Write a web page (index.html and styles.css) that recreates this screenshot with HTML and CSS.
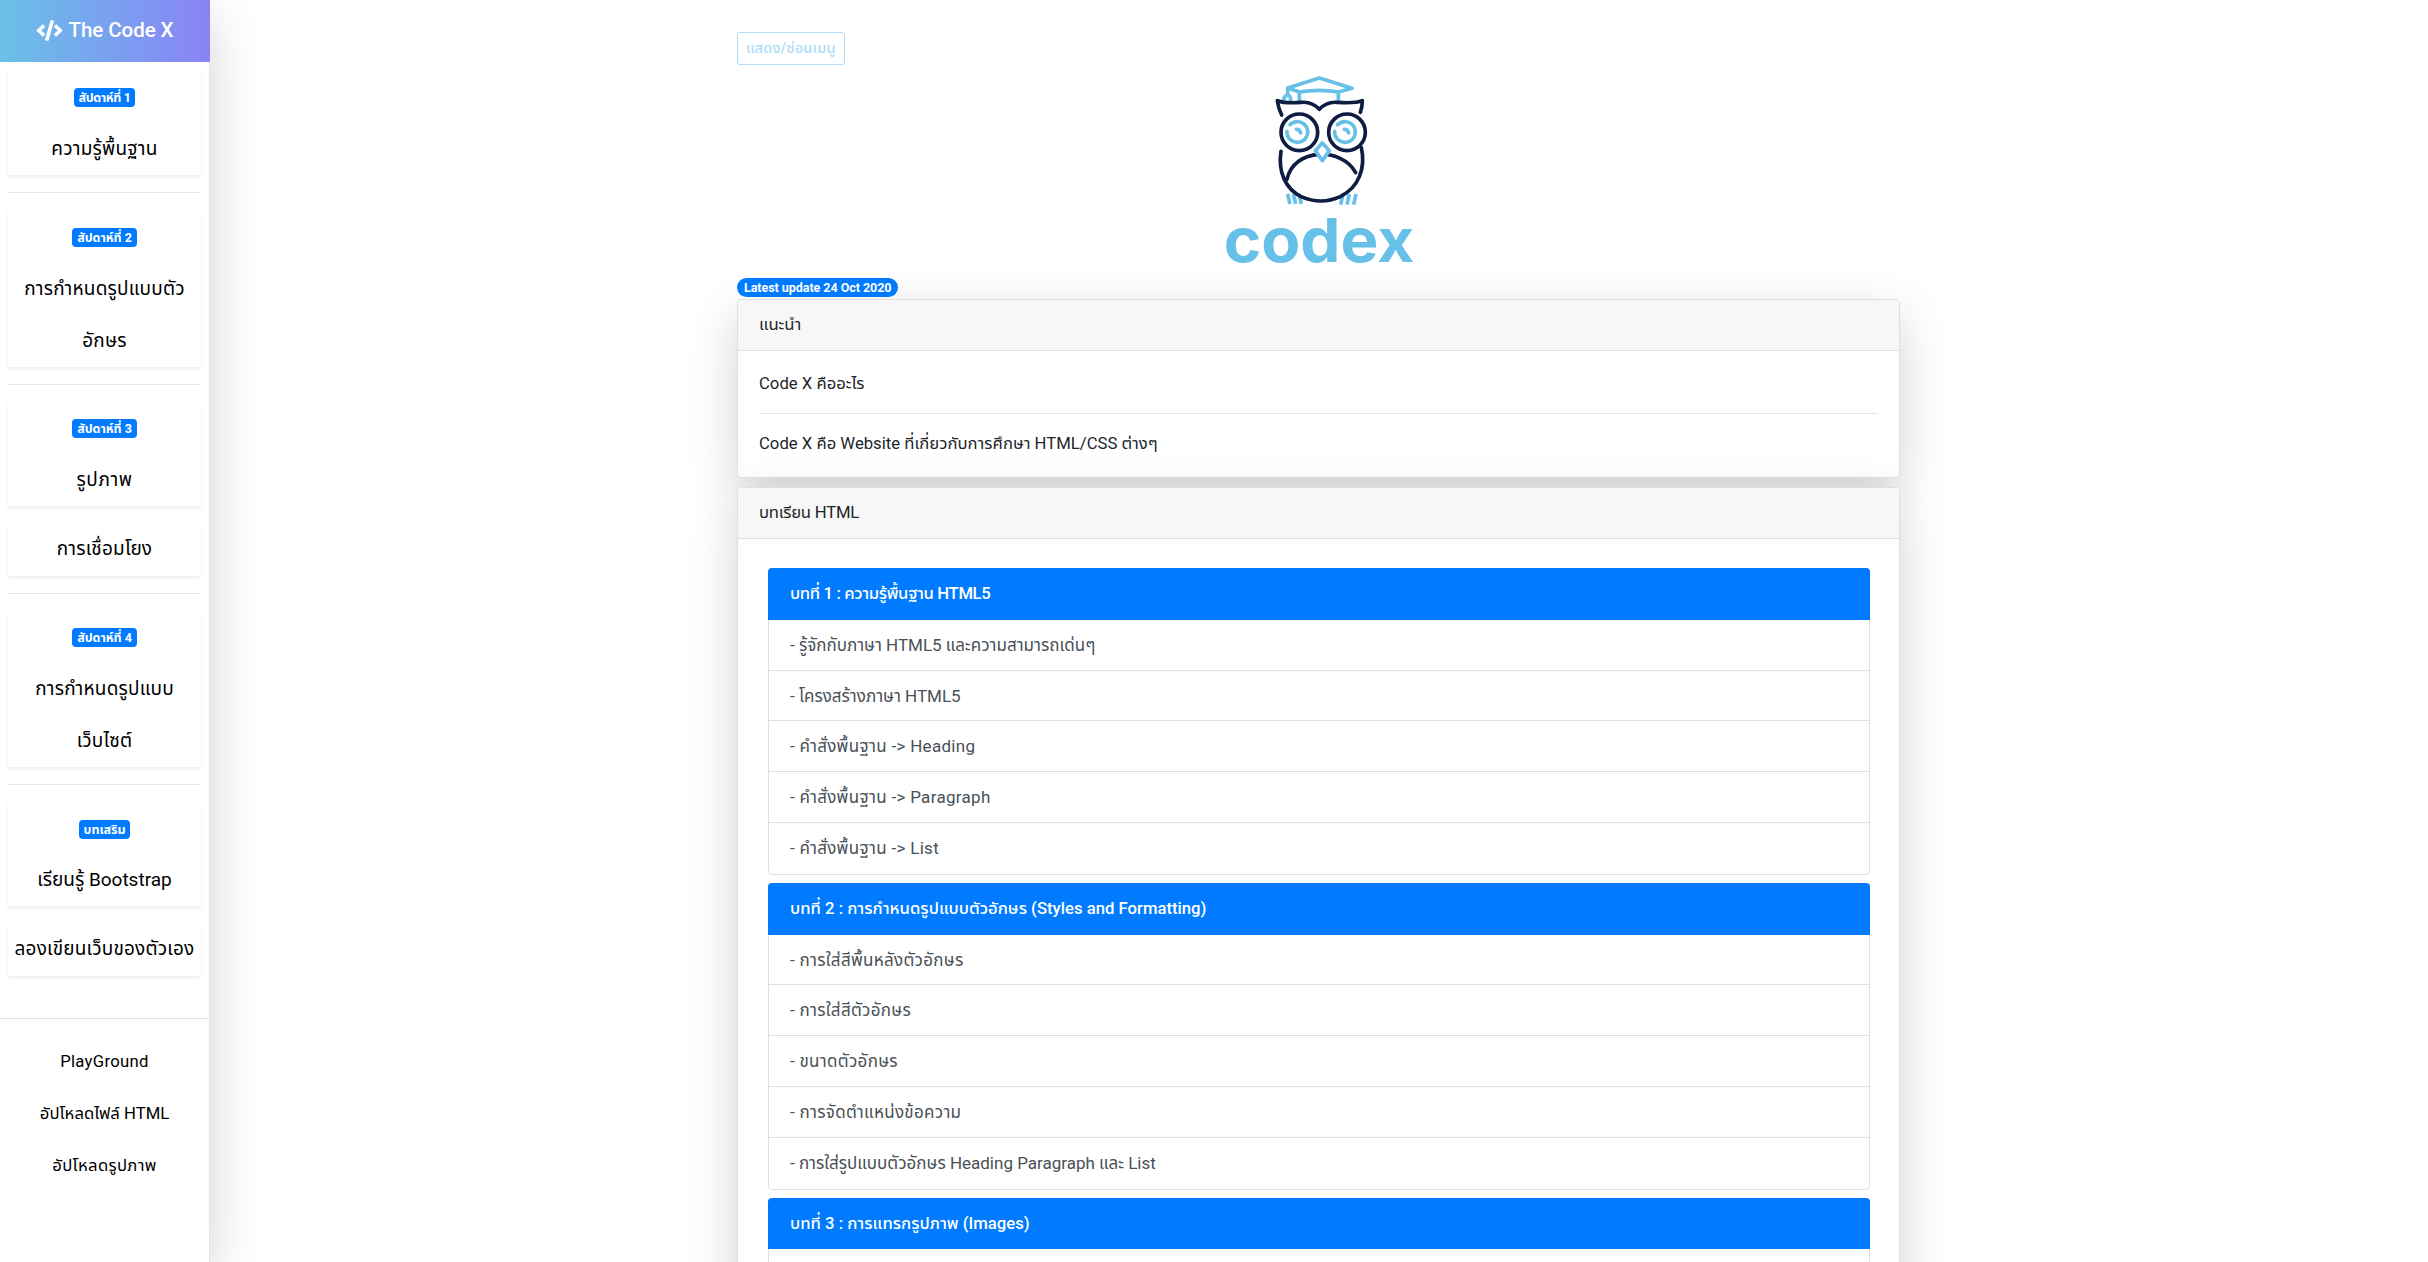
FILE: index.html
```html
<!DOCTYPE html>
<html lang="th">
<head>
<meta charset="utf-8">
<title>The Code X</title>
<link rel="stylesheet" href="styles.css">
</head>
<body>
<div class="wrapper">
  <nav class="sidebar">
    <div class="brand">
      <svg class="brand-icon" viewBox="0 0 640 512" fill="#fff"><path d="M278.9 511.5l-61-17.7c-6.4-1.8-10-8.5-8.2-14.9L346.2 8.7c1.8-6.4 8.5-10 14.9-8.2l61 17.7c6.4 1.8 10 8.5 8.2 14.9L293.8 503.3c-1.9 6.4-8.5 10.1-14.9 8.2zm-114-112.2l43.5-46.4c4.6-4.9 4.3-12.7-.8-17.2L117 256l90.6-79.7c5.1-4.5 5.5-12.3.8-17.2l-43.5-46.4c-4.5-4.8-12.1-5.1-17-.5L3.8 247.2c-5.1 4.7-5.1 12.8 0 17.5l144.1 135.1c4.9 4.6 12.5 4.4 17-.5zm327.2.6l144.1-135.1c5.1-4.7 5.1-12.8 0-17.5L492.1 112.1c-4.8-4.5-12.4-4.3-17 .5L431.6 159c-4.6 4.9-4.3 12.7.8 17.2L523 256l-90.6 79.7c-5.1 4.5-5.5 12.3-.8 17.2l43.5 46.4c4.5 4.9 12.1 5.1 17 .6z"/></svg>
      <span>The Code X</span>
    </div>
    <div class="menu">
      <a class="item"><span class="line"><b class="badge tight">สัปดาห์ที่ 1</b></span><span class="line">ความรู้พื้นฐาน</span></a>
      <hr>
      <a class="item"><span class="line"><b class="badge">สัปดาห์ที่ 2</b></span><span class="line">การกำหนดรูปแบบตัว</span><span class="line">อักษร</span></a>
      <hr>
      <a class="item"><span class="line"><b class="badge">สัปดาห์ที่ 3</b></span><span class="line wide">รูปภาพ</span></a>
      <a class="item next"><span class="line">การเชื่อมโยง</span></a>
      <hr>
      <a class="item"><span class="line"><b class="badge">สัปดาห์ที่ 4</b></span><span class="line">การกำหนดรูปแบบ</span><span class="line">เว็บไซต์</span></a>
      <hr>
      <a class="item"><span class="line"><b class="badge">บทเสริม</b></span><span class="line plain">เรียนรู้ Bootstrap</span></a>
      <a class="item next"><span class="line">ลองเขียนเว็บของตัวเอง</span></a>
    </div>
    <div class="tools">
      <a class="line loose">PlayGround</a>
      <a class="line">อัปโหลดไฟล์ HTML</a>
      <a class="line loose">อัปโหลดรูปภาพ</a>
    </div>
  </nav>
  <main class="content">
    <button class="toggle">แสดง/ซ่อนเมนู</button>
    <svg class="logo" viewBox="-4 0 720 660" fill="none" stroke-width="11" stroke-linecap="round" stroke-linejoin="round">
      <g stroke="#67c0e7">
        <path d="M262 84 357 54l98 31-40 11q-58-10-118 0zM297 97v25M414 97v25M262 86v18M250 120q2-13 12-15q10 2 9 17"/>
        <path d="M262 402l7 30M279 402l7 30M296 402l7 30M428 402l-7 32M447 402l-7 32M467 402l-7 32" stroke-linecap="butt"/>
        <path d="M269 194a31 31 0 1 1-9 20M412 194a31 31 0 1 1-9 20M288 208q11 0 13 11M432 208q11 0 13 11"/>
      </g>
      <g stroke="#0e1c42">
        <path d="M244 165q-11-23-13-43q24 9 72 5q32-3 54 21q22-24 54-21q54 4 75-5q0 18-6 35"/>
        <circle cx="297" cy="217" r="55"/><circle cx="440" cy="217" r="55"/>
        <path d="M242 274c-10 65 15 112 60 136q60 26 118 0c55-28 77-85 63-147M260 358c20-95 165-98 206-20"/>
      </g>
      <path d="M366 249l21 23-21 30-21-30z" stroke="#67c0e7" fill="#fff"/>
      <text x="70" y="605" textLength="572" lengthAdjust="spacingAndGlyphs" class="logo-text">codex</text>
    </svg>
    <div class="updated"><b class="badge pill">Latest update 24 Oct 2020</b></div>
    <section class="card">
      <header class="card-head">แนะนำ</header>
      <div class="card-body">
        <p>Code X คืออะไร</p>
        <hr>
        <p>Code X คือ Website ที่เกี่ยวกับการศึกษา HTML/CSS ต่างๆ</p>
      </div>
    </section>
    <section class="card lessons">
      <header class="card-head snug">บทเรียน HTML</header>
      <div class="lists">
        <ul class="list">
          <li class="active tight">บทที่ 1 : ความรู้พื้นฐาน HTML5</li>
          <li>- รู้จักกับภาษา HTML5 และความสามารถเด่นๆ</li>
          <li>- โครงสร้างภาษา HTML5</li>
          <li class="loose">- คำสั่งพื้นฐาน -&gt; Heading</li>
          <li class="loose">- คำสั่งพื้นฐาน -&gt; Paragraph</li>
          <li class="loose">- คำสั่งพื้นฐาน -&gt; List</li>
        </ul>
        <ul class="list">
          <li class="active">บทที่ 2 : การกำหนดรูปแบบตัวอักษร (Styles and Formatting)</li>
          <li class="loose">- การใส่สีพื้นหลังตัวอักษร</li>
          <li class="loose">- การใส่สีตัวอักษร</li>
          <li class="loose">- ขนาดตัวอักษร</li>
          <li class="loose">- การจัดตำแหน่งข้อความ</li>
          <li>- การใส่รูปแบบตัวอักษร Heading Paragraph และ List</li>
        </ul>
        <ul class="list">
          <li class="active">บทที่ 3 : การแทรกรูปภาพ (Images)</li>
          <li></li>
        </ul>
      </div>
    </section>
  </main>
</div>
</body>
</html>
```
FILE: styles.css
```css
* { box-sizing: border-box; }
body { margin: 0; height: 1262px; overflow: hidden; background: #fff; color: #212529; font: 16.7px/25px Roboto, "Noto Sans Thai", "Noto Sans", sans-serif; }
hr { height: 1px; margin: 0; border: 0; background: #e5e5e5; }
p { margin: 0; }
.wrapper { display: flex; height: 1262px; padding-right: 1px; overflow: hidden; }
.sidebar { width: 210px; flex: none; background: #fff; box-shadow: 0 17px 50px rgba(0,0,0,.175); color: #000; text-align: center; border-right: 1px solid #e4e4e4; white-space: nowrap; }
.brand { height: 62px; margin-right: -1px; padding-bottom: 2px; display: flex; align-items: center; justify-content: center; gap: 5px; background: linear-gradient(90deg, #69c1e8, #8983f6); color: #fff; font-size: 20.5px; font-weight: 500; letter-spacing: -.05px; }
.brand-icon { width: 27px; height: 21px; }
.menu { padding: 9px 8px 0; font-size: 19px; letter-spacing: .2px; }
.menu hr { margin: 17px 0; }
.item { display: block; background: #fff; box-shadow: 0 2px 4px rgba(0,0,0,.075); }
.item.next { margin-top: 17px; }
.line { display: block; height: 52.2px; line-height: 52px; }
.badge { display: inline-block; padding: 0 5px; height: 19px; border-radius: 4px; background: #007bff; color: #fff; font-size: 12.5px; line-height: 19px; font-weight: 700; letter-spacing: -.05px; vertical-align: middle; }
.tight, .badge.tight { letter-spacing: -.37px; }
.snug { letter-spacing: -.24px; }
.loose { letter-spacing: .3px; }
.wide { letter-spacing: .6px; }
.plain { letter-spacing: 0; }
.tools { margin-top: 42px; padding-top: 17px; border-top: 1px solid #e2e2e2; }
.content { width: 1163px; flex: none; margin: 0 auto; padding-top: 32px; }
.toggle { display: block; height: 33px; padding: 0 8px; border: 1px solid #aedbf9; border-radius: 3px; background: #fff; color: #aedbf9; font: inherit; font-size: 14.6px; font-weight: 500; letter-spacing: .12px; }
.logo { display: block; width: 240px; height: 220px; margin: -5px auto 0; }
.logo-text { font: 700 183px Inter, sans-serif; fill: #67c0e7; }
.updated { height: 19px; display: flex; margin: -2px 0 2px; }
.pill { border-radius: 10px; padding: 0 7px; }
.card { border: 1px solid #dfdfdf; border-radius: 4px; background: #fff; box-shadow: 0 17px 50px rgba(0,0,0,.175); }
.card-head { height: 51px; line-height: 50px; padding: 0 21px; background: #f7f7f7; border-bottom: 1px solid #dfdfdf; border-radius: 3px 3px 0 0; }
.card-body { padding: 20px 21px 21px; }
.card-body hr { margin: 17px 0; }
.lessons { margin-top: 9px; height: 900px; }
.lists { display: flex; flex-direction: column; gap: 8px; padding: 29px 29px 29px 30px; }
.list { list-style: none; margin: 0; padding: 0; border: 1px solid #dfdfdf; border-radius: 4px; color: #495057; font-size: 17px; }
.list li { height: 50.8px; padding: 0 21px; line-height: 50px; border-bottom: 1px solid #dfdfdf; }
.list .active { margin: -1px -1px 0; padding: 0 22px; height: 51.8px; line-height: 52px; background: #007bff; color: #fff; border: 0; border-radius: 4px 4px 0 0; font-size: 16.7px; font-weight: 500; }
.list li:last-child { border: 0; }
```
